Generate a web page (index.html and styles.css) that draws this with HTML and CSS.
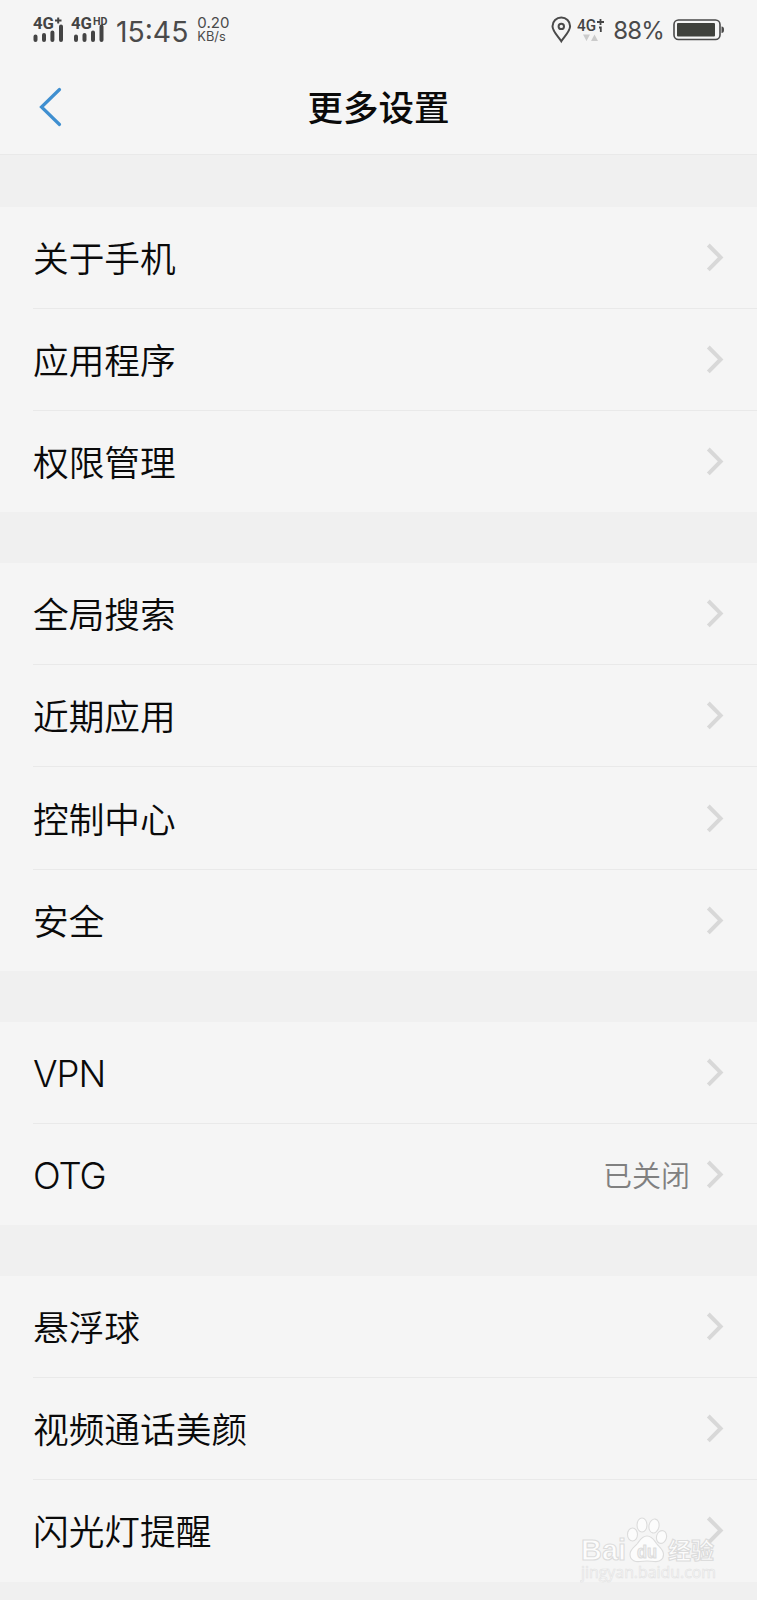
FILE: index.html
```
<!doctype html>
<html lang="zh-CN">
  <head>
    <meta charset="UTF-8" />
    <meta name="viewport" content="width=device-width, initial-scale=1.0" />
    <title>更多设置</title>
    <link rel="stylesheet" href="styles.css">
  </head>

  <body>
    <svg width="0" height="0" class="defs">
      <symbol id="chevron" viewBox="0 0 18 29">
        <path d="M2.3 2 L14.6 14.4 L2.3 26.8" fill="none" stroke="#d8d8d8" stroke-width="4" />
      </symbol>
    </svg>

    <div class="status-bar">
      <svg class="signal" width="31" height="34" viewBox="0 -3 31 34">
        <text x="0" y="13" class="net" textLength="21" lengthAdjust="spacingAndGlyphs">4G</text>
        <path d="M22 4.5h6.5M25.2 1.5v6" class="plus" />
        <path d="M2.5 20.500v3.6M11 19v5.1M19.4 16.500v7.6M28 10.500v13.6" class="bars" />
      </svg>
      <svg class="signal" width="38" height="34" viewBox="0 -3 38 34">
        <text x="0" y="13" class="net" textLength="21" lengthAdjust="spacingAndGlyphs">4G</text>
        <text x="22" y="8.500" class="hd" textLength="14.5" lengthAdjust="spacingAndGlyphs">HD</text>
        <path d="M5 20.500v3.6M13.5 19v5.1M22 16.500v7.6M30.5 10.500v13.6" class="bars" />
      </svg>
      <span class="time">15:45</span>
      <div class="speed">
        <span>0.20</span>
        <span class="unit">KB/s</span>
      </div>

      <div class="status-right">
        <svg width="21" height="28" viewBox="0 0 21 28">
          <path d="M10.3 25.3C8 21.5 1.5 15.5 1.5 10.3a8.8 8.8 0 0 1 17.6 0c0 5.2-6.5 11.2-8.8 15z" class="line" />
          <circle cx="10.3" cy="10.4" r="2.7" class="line" />
        </svg>
        <svg class="data" width="28" height="28" viewBox="0 0 28 28">
          <text x="0" y="15" class="net light" textLength="19" lengthAdjust="spacingAndGlyphs">4G</text>
          <path d="M20 6h7M23.5 3v6M22 11.5h1.8v4.5" class="arrow" />
          <path d="M6 18.500h7l-3.500 6.500zM14 25h7l-3.500-6.500z" fill="#cbcbcb" />
        </svg>
        <span class="percent">88%</span>
        <svg width="52" height="22" viewBox="0 0 52 22">
          <rect x="1" y="1" width="46" height="19.500" rx="4.500" class="line thin" />
          <rect x="4" y="4" width="38" height="13.500" rx="1" fill="#3f413c" />
          <path d="M48.500 7.500q2.500 0 2.500 3.200t-2.500 3.200z" fill="#4a4a4a" />
        </svg>
      </div>
    </div>

    <div class="header">
      <svg class="back" width="26" height="42" viewBox="0 0 26 42">
        <path d="M21.500 3.500 L3.500 21 L21.500 38.500" fill="none" stroke="#3f8fd0" stroke-width="3.200" stroke-linecap="round" />
      </svg>
      <h1>更多设置</h1>
    </div>

    <div class="settings">
      <div class="group">
        <div class="item">关于手机<svg class="chevron"><use href="#chevron" /></svg></div>
        <div class="item">应用程序<svg class="chevron"><use href="#chevron" /></svg></div>
        <div class="item">权限管理<svg class="chevron"><use href="#chevron" /></svg></div>
      </div>

      <div class="group">
        <div class="item">全局搜索<svg class="chevron"><use href="#chevron" /></svg></div>
        <div class="item">近期应用<svg class="chevron"><use href="#chevron" /></svg></div>
        <div class="item">控制中心<svg class="chevron"><use href="#chevron" /></svg></div>
        <div class="item">安全<svg class="chevron"><use href="#chevron" /></svg></div>
      </div>

      <div class="group">
        <div class="item"><span class="latin">VPN</span><svg class="chevron"><use href="#chevron" /></svg></div>
        <div class="item"><span class="latin">OTG</span><span class="value">已关闭</span><svg class="chevron"><use href="#chevron" /></svg></div>
      </div>

      <div class="group">
        <div class="item">悬浮球<svg class="chevron"><use href="#chevron" /></svg></div>
        <div class="item">视频通话美颜<svg class="chevron"><use href="#chevron" /></svg></div>
        <div class="item">闪光灯提醒<svg class="chevron"><use href="#chevron" /></svg></div>
      </div>
    </div>

    <svg class="watermark" width="140" height="70" viewBox="0 0 140 70">
      <g class="mark">
        <text x="1" y="44" font-size="30" textLength="45" lengthAdjust="spacingAndGlyphs">Bai</text>
        <ellipse cx="52.500" cy="18.500" rx="5" ry="6.500" />
        <ellipse cx="62" cy="9" rx="5" ry="7" />
        <ellipse cx="74" cy="10" rx="5" ry="7" transform="rotate(12 74 10)" />
        <ellipse cx="81.500" cy="21" rx="5" ry="6.500" transform="rotate(15 81.500 21)" />
        <path d="M67 20c-5 0-7 4-9.500 7.500-3 3.500-8 6-7.500 11.500.5 6 6 7 10 6.500 5-.8 9-.8 14 0 5 .7 9.500-1.500 9.500-7 0-5-4-7-7-11C74 24 72 20 67 20z" />
        <text x="57" y="41.500" font-size="19" textLength="20" lengthAdjust="spacingAndGlyphs" class="du">du</text>
        <text x="88" y="42.500" font-size="23" textLength="46" lengthAdjust="spacingAndGlyphs">经验</text>
      </g>
      <text x="1" y="62" class="url" textLength="135" lengthAdjust="spacingAndGlyphs">jingyan.baidu.com</text>
    </svg>
  </body>
</html>
```

FILE: styles.css
```
body {
  position: relative;
  height: 1600px;
  margin: 0;
  overflow: hidden;
  background: #f0f0f0;
  color: #0a0a0a;
  font-family: Inter, 'Noto Sans CJK SC', sans-serif;
}

.defs {
  position: absolute;
}

.status-bar {
  display: flex;
  align-items: center;
  height: 60px;
  padding: 0 32px 0 33px;
  background: #f5f5f5;
  color: #4a4a4a;
}

.signal {
  margin-right: 7px;
}

.net {
  font-family: Roboto, sans-serif;
  font-size: 17px;
  font-weight: 700;
  fill: #444;
}

.net.light {
  font-weight: 500;
}

.hd {
  font-family: Roboto, sans-serif;
  font-size: 10px;
  font-weight: 700;
  fill: #444;
}

.plus {
  stroke: #444;
  stroke-width: 2;
}

.arrow {
  fill: none;
  stroke: #444;
  stroke-width: 1.8;
}

.bars {
  stroke: #444;
  stroke-width: 4;
  stroke-linecap: round;
}

.time {
  margin-top: 3px;
  font-size: 28.3px;
  line-height: 34px;
}

.speed {
  display: flex;
  flex-direction: column;
  margin-left: 9px;
  font-size: 15px;
  line-height: 14px;
}

.speed .unit {
  font-size: 12.8px;
}

.status-right {
  display: flex;
  align-items: center;
  margin-left: auto;
}

.data {
  margin: 0 8px 0 5px;
}

.percent {
  margin: 1px 9px 0 0;
  font-size: 24px;
  letter-spacing: -0.8px;
}

.line {
  fill: none;
  stroke: #4a4a4a;
  stroke-width: 2;
}

.line.thin {
  stroke-width: 1.6;
}

.header {
  display: grid;
  grid-template-columns: 1fr auto 1fr;
  align-items: center;
  height: 94px;
  background: #f5f5f5;
  border-bottom: 1px solid #e9e9e9;
}

.back {
  margin-left: 38px;
}

.header h1 {
  margin: 0;
  padding-top: 3px;
  font-size: 35.5px;
  font-weight: 500;
  line-height: 50px;
}

.settings {
  display: flex;
  flex-direction: column;
  gap: 50.5px;
  padding-top: 51.5px;
}

.group {
  background: #f5f5f5;
}

.item {
  display: flex;
  align-items: center;
  height: 99.3px;
  margin-left: 33px;
  padding: 0 33px 2px 0;
  font-size: 35.7px;
  font-weight: 350;
}

.item + .item {
  border-top: 1px solid #e9e9e9;
}

.latin {
  padding-top: 5px;
  font-size: 36.5px;
  font-weight: 320;
  letter-spacing: -1px;
}

.value {
  margin-left: auto;
  color: #808080;
  font-size: 29px;
}

.chevron {
  width: 18px;
  height: 29px;
  margin-top: 2px;
  margin-left: auto;
}

.value + .chevron {
  margin-left: 16px;
}

.watermark {
  position: absolute;
  left: 580px;
  top: 1516px;
}

.mark {
  fill: #fcfcfc;
  stroke: #dcdcdc;
  stroke-width: 1.1;
  font-family: 'Liberation Sans', 'Noto Sans CJK SC', sans-serif;
  font-weight: 700;
}

.du {
  fill: #f0f0f0;
}

.url {
  fill: #fafafa;
  stroke: #e2e2e2;
  stroke-width: 0.6;
  font-family: 'Open Sans', sans-serif;
  font-size: 16px;
}
```
